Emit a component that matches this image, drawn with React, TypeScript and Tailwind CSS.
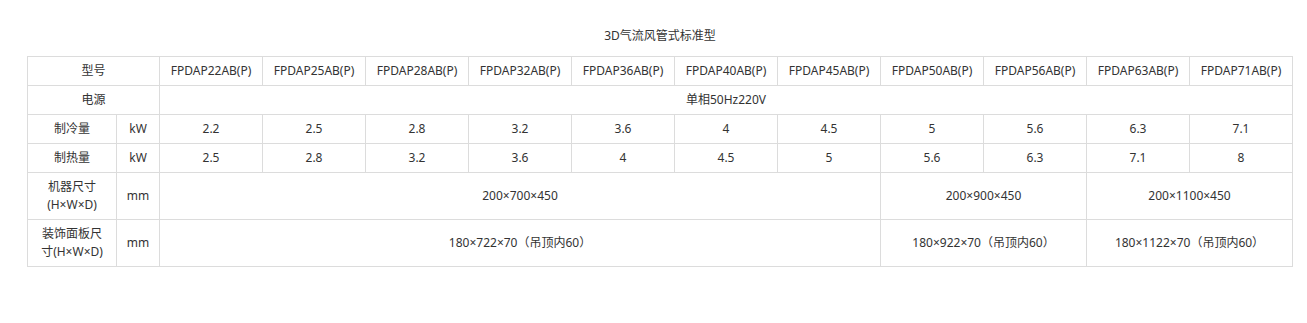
import React from 'react'

const models = ['22', '25', '28', '32', '36', '40', '45', '50', '56', '63', '71']
const cooling = ['2.2', '2.5', '2.8', '3.2', '3.6', '4', '4.5', '5', '5.6', '6.3', '7.1']
const heating = ['2.5', '2.8', '3.2', '3.6', '4', '4.5', '5', '5.6', '6.3', '7.1', '8']

const td = 'border border-[#dcdcdc] text-center align-middle p-0'

const App = () => {
  return (
    <div
      className="bg-white w-[1307px] h-[323px] text-[12px] text-[#333] leading-[18px]"
      style={{ fontFamily: '"Noto Sans", "Noto Sans CJK SC", sans-serif' }}
    >
      <p className="text-center pt-[27px] h-[56px] pl-[13px]">3D气流风管式标准型</p>
      <div className="pl-[27px]">
        <table className="table-fixed border-collapse w-[1266px]">
          <colgroup>
            <col className="w-[89px]" />
            <col className="w-[43px]" />
            {models.map((m) => (
              <col key={m} className="w-[103px]" />
            ))}
          </colgroup>
          <tbody>
            <tr className="h-[29px]">
              <td className={td} colSpan={2}>型号</td>
              {models.map((m) => (
                <td key={m} className={td}>FPDAP{m}AB(P)</td>
              ))}
            </tr>
            <tr className="h-[29px]">
              <td className={td} colSpan={2}>电源</td>
              <td className={td} colSpan={11}>单相50Hz220V</td>
            </tr>
            <tr className="h-[29px]">
              <td className={td}>制冷量</td>
              <td className={td}>kW</td>
              {cooling.map((v, i) => (
                <td key={i} className={td}>{v}</td>
              ))}
            </tr>
            <tr className="h-[29px]">
              <td className={td}>制热量</td>
              <td className={td}>kW</td>
              {heating.map((v, i) => (
                <td key={i} className={td}>{v}</td>
              ))}
            </tr>
            <tr className="h-[47px]">
              <td className={td}>机器尺寸<br />(H×W×D)</td>
              <td className={td}>mm</td>
              <td className={td} colSpan={7}>200×700×450</td>
              <td className={td} colSpan={2}>200×900×450</td>
              <td className={td} colSpan={2}>200×1100×450</td>
            </tr>
            <tr className="h-[47px]">
              <td className={td}>装饰面板尺<br />寸(H×W×D)</td>
              <td className={td}>mm</td>
              <td className={td} colSpan={7}>180×722×70（吊顶内60）</td>
              <td className={td} colSpan={2}>180×922×70（吊顶内60）</td>
              <td className={td} colSpan={2}>180×1122×70（吊顶内60）</td>
            </tr>
          </tbody>
        </table>
      </div>
    </div>
  )
}

export default App
